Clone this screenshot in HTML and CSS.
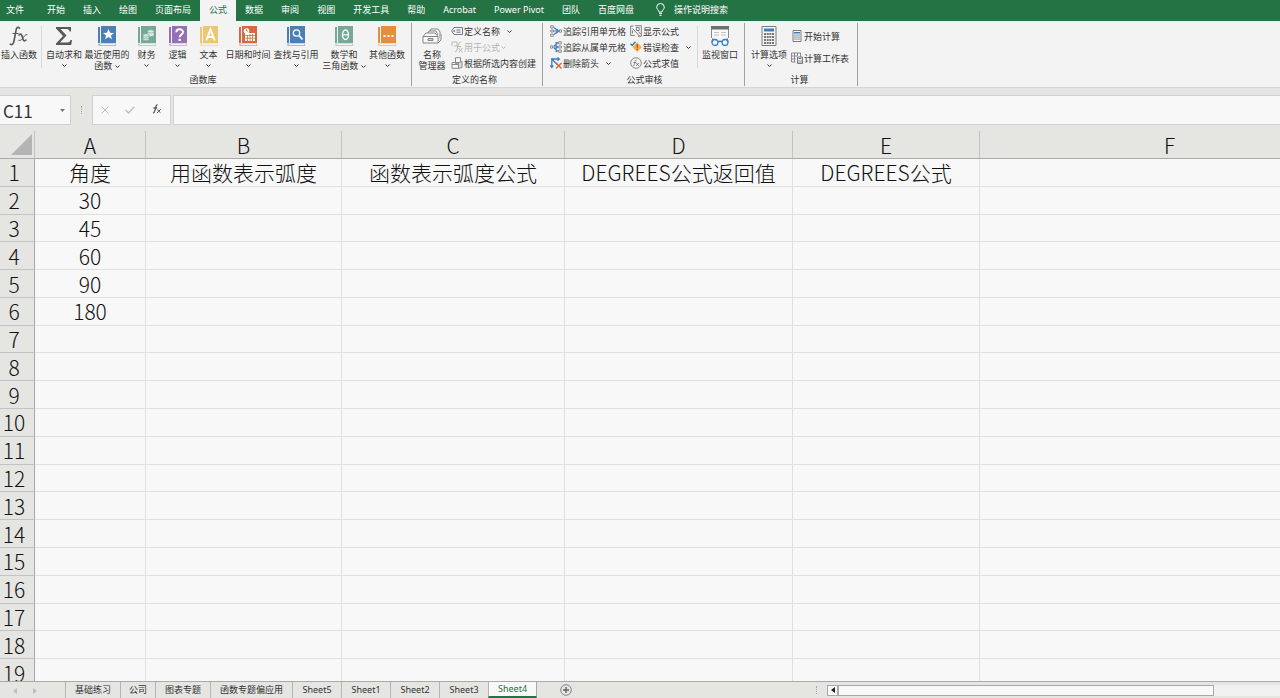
FILE: index.html
```html
<!DOCTYPE html>
<html lang="zh-CN">
  <head>
    <meta charset="UTF-8" />
    <meta name="viewport" content="width=device-width, initial-scale=1.0" />
    <title>Sheet4</title>
    <link rel="stylesheet" href="styles.css">
  </head>

  <body>
    <!-- Shared icon shapes -->
    <svg class="defs" aria-hidden="true">
      <symbol id="book" viewBox="0 0 18 20">
        <path d="M0 1h2v16H0zM3 0h15v17H3z" fill="currentColor" />
        <path d="M0 17.5h18V20H1.500Q0 20 0 18.500z" fill="currentColor" opacity=".45" />
        <path d="M2 18.500h15" stroke="#f3f3f3" />
      </symbol>
      <symbol id="chevron" viewBox="0 0 5 3">
        <path d="M.5.5l2 2 2-2" fill="none" stroke="currentColor" />
      </symbol>
    </svg>

    <!-- Ribbon tabs -->
    <nav class="menu">
      <button class="menu-tab file">文件</button>
      <button class="menu-tab">开始</button>
      <button class="menu-tab">插入</button>
      <button class="menu-tab">绘图</button>
      <button class="menu-tab">页面布局</button>
      <button class="menu-tab active">公式</button>
      <button class="menu-tab">数据</button>
      <button class="menu-tab">审阅</button>
      <button class="menu-tab">视图</button>
      <button class="menu-tab">开发工具</button>
      <button class="menu-tab">帮助</button>
      <button class="menu-tab">Acrobat</button>
      <button class="menu-tab">Power Pivot</button>
      <button class="menu-tab">团队</button>
      <button class="menu-tab">百度网盘</button>
      <button class="menu-tab search">
        <svg width="9" height="13" viewBox="0 0 9 13" fill="none" stroke="#fff"><path d="M3 9C3 7 .7 6.500.7 4.200a3.800 3.700 0 0 1 7.600 0C8.300 6.500 6 7 6 9zM3 10.500h3M3.500 12.300h2" /></svg>
        操作说明搜索
      </button>
    </nav>

    <!-- Ribbon -->
    <div class="ribbon">
      <section class="group library">
        <div class="tools">
          <button class="tool">
            <svg width="20" height="20" viewBox="0 0 20 20" fill="none" stroke="#595959" stroke-linecap="round"><path d="M10.500 2.200C9 .3 7.500 1.500 7 4.500L5 15c-.5 3-2 4.500-3.700 3.200" stroke-width="1.600" /><path d="M4 7.500h5" stroke-width="1.200" /><path d="M10 9c2-2 3 0 3.500 2.500s1.500 4.500 3.500 2.500" stroke-width="1.600" /><path d="M18 8.500c-2 0-3.500 2.500-4.500 4s-2 2.300-3.800 1.800" stroke-width="1" /></svg>
            <span>插入函数</span>
          </button>
          <span class="divider"></span>
          <button class="tool">
            <svg width="18" height="20" viewBox="0 0 18 20"><path d="M1 1h15v4.500h-1.200Q14.500 3 12 3H5.500l6 6.500L5 16.500h7.500q2.500 0 3-2.500H17l-.8 5H1v-1.500l7-7.500-7-7.500z" fill="#595959" /></svg>
            <span>自动求和</span>
            <svg class="chev"><use href="#chevron" /></svg>
          </button>
          <button class="tool wide">
            <svg class="blue" width="18" height="20"><use href="#book" /><path d="M10.500 3l1.500 3.700 4 .2-3.100 2.500 1.100 3.900-3.500-2.200L7 13.300l1.100-3.900L5 6.900l4-.2z" fill="#fff" /></svg>
            <span>最近使用的<br>函数 <svg class="chev"><use href="#chevron" /></svg></span>
          </button>
          <button class="tool narrow">
            <svg class="teal" width="18" height="20"><use href="#book" /><g fill="#d9eae4" stroke="#76a797" stroke-width=".6"><path d="M9.500 4.500q3.200-1.500 6.500 0V10q-3.300 1.300-6.500 0z" /><path d="M5 8.500q3-1.500 6 0V14q-3 1.300-6 0z" /><path d="M9.500 6.300q3.200 1.300 6.500 0M5 10.300q3 1.300 6 0M5 12.200q3 1.300 6 0" fill="none" /></g></svg>
            <span>财务</span>
            <svg class="chev"><use href="#chevron" /></svg>
          </button>
          <button class="tool narrow">
            <svg class="purple" width="18" height="20"><use href="#book" /><path d="M7.300 6.300C7.300 2.300 14 2.500 14 6c0 2.500-3.300 2.500-3.300 5.300" fill="none" stroke="#fff" stroke-width="2" /><path d="M9.600 12.800h2.200V15H9.600z" fill="#fff" /></svg>
            <span>逻辑</span>
            <svg class="chev"><use href="#chevron" /></svg>
          </button>
          <button class="tool narrow">
            <svg class="yellow" width="18" height="20"><use href="#book" /><path d="M6.300 14.500l4.200-11 4.200 11M7.800 11h5.400" fill="none" stroke="#fff" stroke-width="2" /></svg>
            <span>文本</span>
            <svg class="chev"><use href="#chevron" /></svg>
          </button>
          <button class="tool wide">
            <svg class="red" width="18" height="20"><use href="#book" /><path d="M6 7h10v8H6z" fill="#fff" /><path d="M6 9.500h10M6 12.200h10M8.500 9v6M11 8v7M13.500 8v7" stroke="#d66a3f" stroke-width=".8" /><circle cx="7.500" cy="5" r="2.800" fill="#fff" /><path d="M7.500 3.200V5H9" fill="none" stroke="#d66a3f" stroke-width=".8" /></svg>
            <span>日期和时间</span>
            <svg class="chev"><use href="#chevron" /></svg>
          </button>
          <button class="tool wide">
            <svg class="blue" width="18" height="20"><use href="#book" /><circle cx="9.500" cy="7" r="3.200" fill="none" stroke="#fff" stroke-width="1.300" /><path d="M12 9.500l3.500 4" stroke="#fff" stroke-width="1.800" /></svg>
            <span>查找与引用</span>
            <svg class="chev"><use href="#chevron" /></svg>
          </button>
          <button class="tool wide">
            <svg class="teal" width="18" height="20"><use href="#book" /><ellipse cx="10.500" cy="8.800" rx="3" ry="4.800" fill="none" stroke="#fff" stroke-width="1.400" /><path d="M7.500 8.800h6" stroke="#fff" stroke-width="1.200" /></svg>
            <span>数学和<br>三角函数 <svg class="chev"><use href="#chevron" /></svg></span>
          </button>
          <button class="tool">
            <svg class="orange" width="18" height="20"><use href="#book" /><path d="M5.500 9h2v2h-2zM9.500 9h2v2h-2zM13.500 9h2v2h-2z" fill="#fff" /></svg>
            <span>其他函数</span>
            <svg class="chev"><use href="#chevron" /></svg>
          </button>
        </div>
        <h2 class="group-name">函数库</h2>
      </section>

      <section class="group names">
        <div class="tools">
          <button class="tool">
            <svg width="20" height="20" viewBox="0 0 20 20" fill="#f8f8f8" stroke="#858585"><path d="M7 8l2-5h7l2 3v7l-3 3" /><path d="M5 9l2-4h7l2 4" /><path d="M1 10.500L4 7h9l3 3.500v6.500H1z" /><path d="M1 10.500h15M16 17l3-3V8" /><path d="M6 12.500h5v2H6z" fill="#cfcfcf" /></svg>
            <span>名称<br>管理器</span>
          </button>
          <div class="stack">
            <button class="row">
              <svg width="12" height="12" viewBox="0 0 12 12" fill="none" stroke="#7b7b7b"><path d="M.7 6L3 2.500h8.500v7H3z" /><path d="M5.500 5h4M5.500 7.200h4" stroke="#3f7fb8" /><circle cx="3.200" cy="6" r=".6" /></svg>
              定义名称 <svg class="chev gap"><use href="#chevron" /></svg>
            </button>
            <button class="row" disabled>
              <svg width="12" height="12" viewBox="0 0 12 12" fill="none" stroke="#b9b9b9"><path d="M1 1h5v4H3M9.500 1.500C6 1 7.500 10 4 11M6 5.500h4M7.500 7l4 4.500M11.500 7l-4 4.500M1 1v4" /></svg>
              用于公式 <svg class="chev"><use href="#chevron" /></svg>
            </button>
            <button class="row">
              <svg width="12" height="12" viewBox="0 0 12 12" fill="#f8f8f8" stroke="#8a8a8a"><path d="M4.500.7h5v6h-5zM1 5.500h7v5.800H1zM1 7.500h7" /><path d="M7.500 5.500l3.500-1v6l-3.500.8z" fill="#dcdcdc" /></svg>
              根据所选内容创建
            </button>
          </div>
        </div>
        <h2 class="group-name">定义的名称</h2>
      </section>

      <section class="group audit">
        <div class="tools">
          <div class="stack">
            <button class="row">
              <svg width="12" height="12" viewBox="0 0 12 12" fill="none"><path d="M.7.7h2.600v2.300H.7zM.7 5h2.600v2H.7zM.7 9h2.600v2.300H.7zM9.500 4.800h2v2.400h-2z" stroke="#858585" stroke-width=".9" /><path d="M3.500 6h5M4 2.500l3 2.500M4 9.500L7 7M6.500 3.800L8.700 6 6.500 8.200" stroke="#3f7fc1" stroke-width="1.200" /></svg>
              追踪引用单元格
            </button>
            <button class="row">
              <svg width="12" height="12" viewBox="0 0 12 12" fill="none"><path d="M.5 4.800h2v2.400h-2zM8.700.7h2.600v2.300H8.700zM8.700 5h2.600v2H8.700zM8.700 9h2.600v2.300H8.700z" stroke="#858585" stroke-width=".9" /><path d="M3 6h4.500M4 5l3.500-3M4 7l3.500 3M5.800 4.300L7.600 6 5.800 7.700M5.500 1.700h2.300M5.500 10.300h2.300" stroke="#3f7fc1" stroke-width="1.200" /></svg>
              追踪从属单元格
            </button>
            <button class="row">
              <svg width="12" height="12" viewBox="0 0 12 12" fill="none"><path d="M1.800 1v9M1.800 2l6 6M1.800 2H9M.3 8.500l1.500 2 1.500-2M7.500.5L9.300 2 7.500 3.700" stroke="#3f7fc1" stroke-width="1.300" /><path d="M6 6l5.500 5.500M11.500 6L6 11.500" stroke="#d9673a" stroke-width="1.400" /></svg>
              删除箭头 <svg class="chev gap"><use href="#chevron" /></svg>
            </button>
          </div>
          <div class="stack second">
            <button class="row">
              <svg width="12" height="12" viewBox="0 0 12 12" fill="none" stroke="#737373" stroke-width=".9"><path d="M3.500 1H.7v9.500h4M5 .7h6.300v10.600H8M2.500 3.500l7 7.500M6.500 2.500v3h2.700v-3zM2.500 5.500v3M8.500 6.500l2 2.500" /></svg>
              显示公式
            </button>
            <button class="row">
              <svg width="12" height="12" viewBox="0 0 12 12"><path d="M7.200 1.300l4.600 4.900-4.600 4.900-4.600-4.900z" fill="#efb14c" /><path d="M7.200 3.300v3.500M7.200 7.800v1.300" stroke="#b0401c" stroke-width="1.200" /><path d="M.5 2.800l1.700 1.700L5.500.7" fill="none" stroke="#3a73b5" stroke-width="1.500" /></svg>
              错误检查 <svg class="chev gap"><use href="#chevron" /></svg>
            </button>
            <button class="row">
              <svg width="12" height="12" viewBox="0 0 12 12" fill="none" stroke="#6d6d6d" stroke-width=".8"><circle cx="6" cy="6" r="5.300" /><path d="M6.500 3C4.500 2.500 5 9 3 9M3.500 5.500h2.700M6.300 6l2.500 3M9 6L6 9" /></svg>
              公式求值
            </button>
          </div>
          <span class="divider"></span>
          <button class="tool">
            <svg width="20" height="20" viewBox="0 0 20 20" fill="none"><path d="M1.500.5h17v16h-17z" fill="#f8f8f8" stroke="#8a8a8a" /><path d="M1 0h18v3.500H1z" fill="#6f6f6f" /><path d="M4 6.500h5M4 9h5M11 6.500h5M11 9h5" stroke="#c4c4c4" /><path d="M0 12h20v8H0z" fill="#f3f3f3" /><circle cx="5" cy="16.500" r="3" stroke="#3f7fb8" stroke-width="1.300" /><circle cx="15" cy="16.500" r="3" stroke="#3f7fb8" stroke-width="1.300" /><path d="M8 16q2-1.500 4 0M2 16l1-3.500M18 16l-1-3.500" stroke="#3f7fb8" stroke-width="1.300" /></svg>
            <span>监视窗口</span>
          </button>
        </div>
        <h2 class="group-name">公式审核</h2>
      </section>

      <section class="group calc">
        <div class="tools">
          <button class="tool">
            <svg width="16" height="20" viewBox="0 0 16 20"><path d="M1 .5h14v19H1z" fill="#f5f5f5" stroke="#7b7b7b" /><path d="M3 2.500h10v3H3z" fill="#3f7fb8" /><path d="M3 7h2v2H3zM5.700 7h2v2h-2zM8.300 7h2v2h-2zM11 7h2v2h-2zM3 10h2v2H3zM5.700 10h2v2h-2zM8.300 10h2v2h-2zM11 10h2v2h-2zM3 13h2v2H3zM5.700 13h2v2h-2zM8.300 13h2v2h-2zM11 13h2v2h-2zM3 16h2v2H3zM5.700 16h2v2h-2zM8.300 16h2v2h-2zM11 16h2v2h-2z" fill="#777" /></svg>
            <span>计算选项</span>
            <svg class="chev"><use href="#chevron" /></svg>
          </button>
          <div class="stack loose">
            <button class="row">
              <svg width="12" height="12" viewBox="0 0 12 12"><path d="M2 .5h8v11H2z" fill="#f5f5f5" stroke="#7b7b7b" /><path d="M3 2h6v1.500H3z" fill="#3f7fb8" /><path d="M4 4.500v6M6 4.500v6M8 4.500v6" stroke="#777" stroke-dasharray="1.200 .8" stroke-width="1.200" /></svg>
              开始计算
            </button>
            <button class="row">
              <svg width="12" height="12" viewBox="0 0 12 12" fill="none"><path d="M.5 1h9v4M.5 1v9h4M.5 4h6M.5 7h4M3.500 1v9M6.500 1v3" stroke="#8a8a8a" /><path d="M6.500 5h5v6.500h-5z" fill="#f5f5f5" stroke="#7b7b7b" /><path d="M7.500 6.500h3" stroke="#3f7fb8" /><path d="M8 8v3M10 8v3" stroke="#777" stroke-width=".8" /></svg>
              计算工作表
            </button>
          </div>
        </div>
        <h2 class="group-name">计算</h2>
      </section>
    </div>

    <!-- Name box and formula bar -->
    <div class="formula-bar">
      <div class="name-box">
        <input type="text" value="C11" aria-label="名称框" />
        <button aria-label="选择名称"><svg width="5" height="3"><path d="M0 0h5L2.500 3z" fill="#777" /></svg></button>
      </div>
      <span class="grip"></span>
      <div class="entry-buttons">
        <button aria-label="取消"><svg width="8" height="8" fill="none" stroke="#bdbdbd"><path d="M.5.5l7 7M7.500.5l-7 7" /></svg></button>
        <button aria-label="输入"><svg width="10" height="8" fill="none" stroke="#bdbdbd" stroke-width="1.300"><path d="M.7 4l2.800 3L9.300.7" /></svg></button>
        <button aria-label="插入函数"><svg width="10" height="10" fill="none" stroke="#595959"><path d="M5.500 1C3 0 4 9 1 9M1.500 4h3.700" stroke-width="1.300" /><path d="M5 5.500l3.500 3.200M8.800 5.200L5 9" /></svg></button>
      </div>
      <input class="formula" type="text" aria-label="编辑栏" />
    </div>

    <!-- Worksheet -->
    <main class="sheet">
      <table>
        <colgroup>
          <col class="col-head"><col class="col-a"><col class="col-b"><col class="col-c"><col class="col-d"><col class="col-e"><col>
        </colgroup>
        <thead>
          <tr>
            <th class="corner"><svg width="21" height="21"><path d="M21 0v21H0z" fill="#b4b4b4" /></svg></th>
            <th>A</th><th>B</th><th>C</th><th>D</th><th>E</th><th>F</th>
          </tr>
        </thead>
        <tbody id="rows"></tbody>
      </table>
    </main>

    <!-- Sheet tabs -->
    <footer class="sheet-bar">
      <div class="sheet-nav">
        <button aria-label="上一张"><svg width="4" height="6"><path d="M4 0v6L0 3z" fill="#bcbcc4" /></svg></button>
        <button aria-label="下一张"><svg width="4" height="6"><path d="M0 0v6l4-3z" fill="#bcbcc4" /></svg></button>
      </div>
      <button class="sheet-tab">基础练习</button>
      <button class="sheet-tab short">公司</button>
      <button class="sheet-tab">图表专题</button>
      <button class="sheet-tab">函数专题偏应用</button>
      <button class="sheet-tab numbered">Sheet5</button>
      <button class="sheet-tab numbered">Sheet1</button>
      <button class="sheet-tab numbered">Sheet2</button>
      <button class="sheet-tab numbered">Sheet3</button>
      <button class="sheet-tab numbered current">Sheet4</button>
      <button class="add-sheet" aria-label="新工作表"><svg width="12" height="12" fill="none" stroke="#858585"><circle cx="6" cy="6" r="5.300" /><path d="M6 3v6M3 6h6" stroke="#666" stroke-width="1.400" /></svg></button>
      <div class="scroll-area">
        <span class="grip"></span>
        <div class="scrollbar">
          <button aria-label="向左滚动"><svg width="4" height="6"><path d="M4 0v6L0 3z" fill="#222" /></svg></button>
          <div class="thumb"></div>
        </div>
      </div>
    </footer>

    <script>
      const data = [
        ["角度", "用函数表示弧度", "函数表示弧度公式", "DEGREES公式返回值", "DEGREES公式"],
        ["30"],
        ["45"],
        ["60"],
        ["90"],
        ["180"],
      ];
      const rowCount = 19;
      const columnCount = 6;
      const rows = document.getElementById("rows");

      // Fill the worksheet, leaving cells without data empty
      for (let r = 0; r < rowCount; r++) {
        const tr = document.createElement("tr");
        const th = document.createElement("th");
        th.textContent = r + 1;
        tr.appendChild(th);

        for (let c = 0; c < columnCount; c++) {
          const td = document.createElement("td");
          td.textContent = (data[r] && data[r][c]) || "";
          tr.appendChild(td);
        }
        rows.appendChild(tr);
      }
    </script>
  </body>
</html>
```
FILE: styles.css
```css
* {
  box-sizing: border-box;
}

body {
  margin: 0;
  height: 100vh;
  display: flex;
  flex-direction: column;
  overflow: hidden;
  background-color: #e5e5e2;
  color: #333;
  font-family: "Noto Sans", "Noto Sans CJK SC", sans-serif;
  font-size: 9px;
}

button {
  margin: 0;
  padding: 0;
  border: none;
  background: none;
  color: inherit;
  font: inherit;
  white-space: nowrap;
  cursor: pointer;
}

svg {
  flex: none;
}

.defs {
  position: absolute;
  width: 0;
  height: 0;
}

/* Ribbon tabs */
.menu {
  display: flex;
  height: 21px;
  flex: none;
  background-color: #247345;
  color: #fff;
}

.menu-tab {
  padding: 0 9px 2px;
}

.menu-tab.file {
  padding-left: 6px;
  padding-right: 14px;
}

.menu-tab.active {
  background-color: #f3f3f3;
  color: #247345;
}

.menu-tab.search {
  display: flex;
  align-items: center;
  gap: 9px;
  padding-left: 13px;
}

/* Ribbon */
.ribbon {
  display: flex;
  flex: none;
  padding: 2px 0 1px;
  background-color: #f3f3f3;
  border-bottom: 1px solid #d5d5d3;
}

.group {
  display: flex;
  flex-direction: column;
  border-right: 1px solid #a3a3a3;
}

.group.library {
  padding-right: 5px;
}

.group.names {
  padding: 0 6px 0 1px;
}

.group.audit {
  padding: 0 5px 0 7px;
}

.group.calc {
  padding: 0 8px 0 5px;
}

.tools {
  display: flex;
  height: 51px;
}

.group-name {
  margin: 0;
  font-size: 9px;
  font-weight: normal;
  line-height: 12px;
  text-align: center;
}

.tool {
  display: flex;
  flex-direction: column;
  align-items: center;
  width: 38px;
  padding-top: 3px;
  line-height: 11px;
}

.tool.narrow {
  width: 31px;
}

.tool.wide {
  width: 48px;
}

.tool > span {
  margin-top: 3px;
}

.tool > .chev {
  margin-top: 4px;
}

.chev {
  width: 5px;
  height: 3px;
  vertical-align: middle;
}

.divider {
  width: 1px;
  height: 42px;
  margin: 3px 3px 3px 2px;
  background-color: #d8d8d8;
}

.library .divider {
  margin: 3px;
}

.stack {
  display: flex;
  flex-direction: column;
  align-items: flex-start;
}

.stack.second {
  margin-left: 4px;
  padding-right: 4px;
}

.stack.loose {
  padding: 2px 0 0 3px;
}

.row {
  display: flex;
  align-items: center;
  gap: 1px;
  height: 16px;
}

.stack.loose .row {
  height: 22px;
}

.row:disabled {
  color: #b5b5b5;
}

.chev.gap {
  margin-left: 6px;
}

.blue {
  color: #4a80b5;
}

.teal {
  color: #76a797;
}

.purple {
  color: #9470b4;
}

.yellow {
  color: #ebc673;
}

.red {
  color: #d66a3f;
}

.orange {
  color: #e58e42;
}

/* Formula bar */
.formula-bar {
  display: flex;
  flex: none;
  height: 43px;
  padding: 7px 0 6px;
}

.formula-bar input {
  min-width: 0;
  padding: 0 3px;
  border: none;
  outline: none;
  background: none;
  color: #333;
  font-family: "Noto Sans CJK SC", sans-serif;
  font-size: 17px;
}

.name-box {
  display: flex;
  width: 71px;
  background-color: #f8f8f8;
  border: 1px solid #d0d0d0;
  border-left: none;
}

.name-box input {
  flex: 1;
}

.name-box button {
  display: flex;
  align-items: center;
  padding: 0 5px;
}

.grip {
  align-self: center;
  height: 8px;
  margin: 0 10px;
  border-left: 1px dotted #a5a5a5;
}

.entry-buttons {
  display: flex;
  align-items: center;
  justify-content: space-around;
  width: 79px;
  margin-right: 2px;
  background-color: #f8f8f8;
  border: 1px solid #d0d0d0;
}

.formula-bar .formula {
  flex: 1;
  background-color: #f8f8f8;
  border: 1px solid #d0d0d0;
  border-right: none;
}

/* Worksheet */
.sheet {
  flex: 1;
  min-height: 0;
  overflow: hidden;
}

/* The last row and column run past the edge of the window */
table {
  width: calc(100% + 80px);
  height: calc(100% + 6px);
  table-layout: fixed;
  border-collapse: separate;
  border-spacing: 0;
  color: #111;
  font-family: "Noto Sans CJK SC", sans-serif;
  font-size: 21px;
  font-weight: 300;
  line-height: 26px;
}

.col-head {
  width: 35px;
}

.col-a {
  width: 111px;
}

.col-b {
  width: 196px;
}

.col-c {
  width: 223px;
}

.col-d {
  width: 228px;
}

.col-e {
  width: 187px;
}

th,
td {
  padding: 0;
  text-align: center;
  white-space: nowrap;
}

th {
  font-weight: 300;
  border-right: 1px solid #c3c3c6;
  border-bottom: 1px solid #a9a9ad;
}

thead th {
  height: 28px;
}

.corner {
  text-align: right;
  padding-right: 2px;
}

.corner svg {
  display: block;
  margin-left: auto;
}

tbody th {
  padding-right: 6px;
  border-right-color: #a9a9ad;
  border-bottom-color: #c3c3c6;
}

td {
  background-color: #f8f8f8;
  border-right: 1px solid #e0e0e0;
  border-bottom: 1px solid #e0e0e0;
}

/* Sheet tabs */
.sheet-bar {
  display: flex;
  flex: none;
  height: 17px;
  background-color: #e5e5e2;
  border-top: 1px solid #a9a9ad;
}

.sheet-nav {
  display: flex;
  align-items: center;
  gap: 16px;
  width: 65px;
  padding-left: 13px;
}

.sheet-tab {
  padding: 0 9px;
  line-height: 14px;
  border-left: 1px solid #b5b5b9;
}

.sheet-tab.short {
  padding: 0 8px;
}

.sheet-tab.numbered {
  width: 49px;
  padding: 0;
}

.sheet-tab.current {
  background-color: #f8f8f8;
  color: #247345;
  border-right: 1px solid #a9a9ad;
  border-bottom: 2px solid #247345;
}

.add-sheet {
  display: flex;
  align-items: center;
  margin-left: 23px;
}

.scroll-area {
  display: flex;
  align-items: center;
  width: 37%;
  margin-left: auto;
}

.scrollbar {
  display: flex;
  flex: 1;
  height: 11px;
  background-color: #f0f0f0;
}

.scrollbar button {
  display: flex;
  align-items: center;
  justify-content: center;
  width: 11px;
  background-color: #f8f8f8;
  border: 1px solid #a9a9a9;
}

.thumb {
  width: 83%;
  background-color: #f8f8f8;
  border: 1px solid #a9a9a9;
}
```
